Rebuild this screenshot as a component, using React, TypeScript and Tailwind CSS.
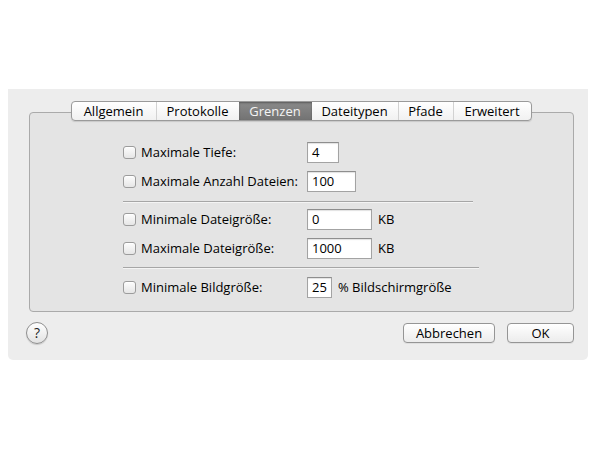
import React from 'react';

const tabs = [
  { label: 'Allgemein', w: 'w-[84px]' },
  { label: 'Protokolle', w: 'w-[83px]' },
  { label: 'Grenzen', w: 'w-[73px]', active: true },
  { label: 'Dateitypen', w: 'w-[86px]' },
  { label: 'Pfade', w: 'w-[55px]' },
  { label: 'Erweitert', w: 'w-[78px]' },
];

function Checkbox() {
  return (
    <span className="w-[13px] h-[13px] shrink-0 rounded-[3px] border border-[#9c9c9c] bg-gradient-to-b from-[#fdfdfd] to-[#e6e6e6] shadow-[inset_0_1px_0_#fff]" />
  );
}

function Field({ value, w }: { value: string; w: string }) {
  return (
    <div className={`${w} h-[21px] bg-white border border-[#a3a3a3] border-t-[#8e8e8e] shadow-[inset_0_1px_1px_rgba(0,0,0,0.12)] flex items-center pl-[4px] text-[13px] text-black`}>
      {value}
    </div>
  );
}

function Row({ label, value, w, unit }: { label: string; value: string; w: string; unit?: string }) {
  return (
    <div className="flex items-center h-[21px]">
      <div className="w-[184px] flex items-center gap-[5px]">
        <Checkbox />
        <span className="text-[13px] text-black leading-none">{label}</span>
      </div>
      <Field value={value} w={w} />
      {unit && <span className="ml-[6px] text-[13px] text-black leading-none">{unit}</span>}
    </div>
  );
}

function Separator({ w }: { w: string }) {
  return <div className={`${w} h-px bg-[#a6a6a6] shadow-[0_1px_0_#f4f4f4]`} />;
}

function PushButton({ label, w }: { label: string; w: string }) {
  return (
    <button className={`${w} h-[20px] rounded-[4px] border border-[#959595] bg-gradient-to-b from-white to-[#ececec] text-[13px] text-black leading-none shadow-[0_1px_0_rgba(0,0,0,0.06)]`}>
      {label}
    </button>
  );
}

export default function App() {
  return (
    <div className="w-[598px] h-[449px] bg-white pt-[89px] pl-[8px] font-['Open_Sans',sans-serif]">
      <div className="w-[580px] h-[271px] bg-[#ededed] rounded-b-[5px] pt-[12px] flex flex-col">
        <div className="flex justify-center -mb-[9px] relative z-10 pl-[6px]">
          <div className="flex h-[20px] rounded-[4px] border border-[#9a9a9a] bg-gradient-to-b from-white to-[#f1f1f1] shadow-[0_1px_1px_rgba(0,0,0,0.12)] overflow-hidden">
            {tabs.map((t, i) => (
              <div
                key={t.label}
                className={
                  t.active
                    ? `${t.w} flex items-center justify-center bg-gradient-to-b from-[#8a8a8a] to-[#737373] text-[#f4f4f4] text-[13px] leading-none shadow-[inset_0_1px_2px_rgba(0,0,0,0.35)]`
                    : `${t.w} flex items-center justify-center text-[13px] text-black leading-none ${i > 0 && !tabs[i - 1].active ? 'border-l border-[#d2d2d2]' : ''}`
                }
              >
                {t.label}
              </div>
            ))}
          </div>
        </div>

        <div className="ml-[21px] w-[545px] h-[200px] rounded-[4px] border border-[#aaaaaa] bg-[#e4e4e4] pt-[29px] pl-[93px] flex flex-col">
          <Row label="Maximale Tiefe:" value="4" w="w-[32px]" />
          <div className="mt-[8px]">
            <Row label="Maximale Anzahl Dateien:" value="100" w="w-[49px]" />
          </div>
          <div className="mt-[9px]">
            <Separator w="w-[350px]" />
          </div>
          <div className="mt-[7px]">
            <Row label="Minimale Dateigröße:" value="0" w="w-[65px]" unit="KB" />
          </div>
          <div className="mt-[8px]">
            <Row label="Maximale Dateigröße:" value="1000" w="w-[65px]" unit="KB" />
          </div>
          <div className="mt-[8px]">
            <Separator w="w-[356px]" />
          </div>
          <div className="mt-[9px]">
            <Row label="Minimale Bildgröße:" value="25" w="w-[25px]" unit="% Bildschirmgröße" />
          </div>
        </div>

        <div className="flex items-center mt-[10px] pl-[18px] pr-[14px]">
          <div className="w-[22px] h-[22px] rounded-full border border-[#8f8f8f] bg-gradient-to-b from-white to-[#e2e2e2] flex items-center justify-center text-[14px] text-[#222] leading-none shadow-[0_1px_1px_rgba(0,0,0,0.15)]">
            ?
          </div>
          <div className="ml-auto flex gap-[12px]">
            <PushButton label="Abbrechen" w="w-[92px]" />
            <PushButton label="OK" w="w-[67px]" />
          </div>
        </div>
      </div>
    </div>
  );
}
